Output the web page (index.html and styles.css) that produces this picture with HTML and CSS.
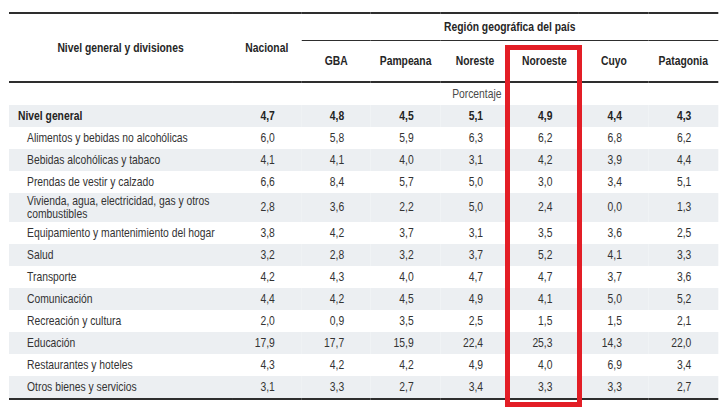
FILE: index.html
```html
<!DOCTYPE html>
<html lang="es">
<head>
<meta charset="utf-8">
<title>Variación por región</title>
<link rel="stylesheet" href="styles.css">
</head>
<body>
<div class="wrap">
  <div class="narrow">
    <table class="tbl">
      <colgroup>
        <col class="c-name">
        <col><col><col><col><col><col><col>
      </colgroup>
      <thead>
        <tr class="h1">
          <th rowspan="2" class="h-name">Nivel general y divisiones</th>
          <th rowspan="2" class="h-nac">Nacional</th>
          <th colspan="6" class="h-region">Región geográfica del país</th>
        </tr>
        <tr class="h2">
          <th>GBA</th><th>Pampeana</th><th>Noreste</th><th>Noroeste</th><th>Cuyo</th><th>Patagonia</th>
        </tr>
      </thead>
      <tbody>
        <tr class="unit"><td></td><td></td><td></td><td></td><td class="unit-cell">Porcentaje</td><td></td><td></td><td></td></tr>
        <tr class="total alt"><td class="name">Nivel general</td><td>4,7</td><td>4,8</td><td>4,5</td><td>5,1</td><td>4,9</td><td>4,4</td><td>4,3</td></tr>
        <tr><td class="name sub">Alimentos y bebidas no alcohólicas</td><td>6,0</td><td>5,8</td><td>5,9</td><td>6,3</td><td>6,2</td><td>6,8</td><td>6,2</td></tr>
        <tr class="alt"><td class="name sub">Bebidas alcohólicas y tabaco</td><td>4,1</td><td>4,1</td><td>4,0</td><td>3,1</td><td>4,2</td><td>3,9</td><td>4,4</td></tr>
        <tr><td class="name sub">Prendas de vestir y calzado</td><td>6,6</td><td>8,4</td><td>5,7</td><td>5,0</td><td>3,0</td><td>3,4</td><td>5,1</td></tr>
        <tr class="alt tall"><td class="name sub">Vivienda, agua, electricidad, gas y otros<br>combustibles</td><td>2,8</td><td>3,6</td><td>2,2</td><td>5,0</td><td>2,4</td><td>0,0</td><td>1,3</td></tr>
        <tr><td class="name sub">Equipamiento y mantenimiento del hogar</td><td>3,8</td><td>4,2</td><td>3,7</td><td>3,1</td><td>3,5</td><td>3,6</td><td>2,5</td></tr>
        <tr class="alt"><td class="name sub">Salud</td><td>3,2</td><td>2,8</td><td>3,2</td><td>3,7</td><td>5,2</td><td>4,1</td><td>3,3</td></tr>
        <tr><td class="name sub">Transporte</td><td>4,2</td><td>4,3</td><td>4,0</td><td>4,7</td><td>4,7</td><td>3,7</td><td>3,6</td></tr>
        <tr class="alt"><td class="name sub">Comunicación</td><td>4,4</td><td>4,2</td><td>4,5</td><td>4,9</td><td>4,1</td><td>5,0</td><td>5,2</td></tr>
        <tr><td class="name sub">Recreación y cultura</td><td>2,0</td><td>0,9</td><td>3,5</td><td>2,5</td><td>1,5</td><td>1,5</td><td>2,1</td></tr>
        <tr class="alt"><td class="name sub">Educación</td><td>17,9</td><td>17,7</td><td>15,9</td><td>22,4</td><td>25,3</td><td>14,3</td><td>22,0</td></tr>
        <tr><td class="name sub">Restaurantes y hoteles</td><td>4,3</td><td>4,2</td><td>4,2</td><td>4,9</td><td>4,0</td><td>6,9</td><td>3,4</td></tr>
        <tr class="alt last"><td class="name sub">Otros bienes y servicios</td><td>3,1</td><td>3,3</td><td>2,7</td><td>3,4</td><td>3,3</td><td>3,3</td><td>2,7</td></tr>
      </tbody>
    </table>
  </div>
  <div class="highlight"></div>
</div>
</body>
</html>
```

FILE: styles.css
```css
html, body {
  margin: 0;
  padding: 0;
  background: #ffffff;
  overflow: hidden;
}

body {
  font-family: "Liberation Sans", Arial, sans-serif;
  font-size: 12.6px;
  color: #333333;
}

.wrap {
  position: relative;
  padding: 12px 0 0 9px;
  width: 709px;
  height: 400px;
}

/* Emulates the condensed grotesque of the source table */
.narrow {
  width: 864.6px;
  transform: scaleX(0.82);
  transform-origin: 0 0;
}

.tbl {
  width: 864.6px;
  table-layout: fixed;
  border-collapse: collapse;
  border-spacing: 0;
}

.c-name {
  width: 272px;
}

.tbl th {
  font-weight: bold;
  color: #262626;
  padding: 0;
  text-align: center;
  vertical-align: middle;
  line-height: 14px;
}

.h1 th {
  border-top: 2px solid #2e2e2e;
  height: 26px;
}

.h1 .h-name,
.h1 .h-nac {
  border-bottom: 2px solid #2e2e2e;
}

.h-region {
  border-bottom: 1.5px solid #2e2e2e;
}

.h2 th {
  height: 40px;
  border-bottom: 2px solid #2e2e2e;
}

.tbl td {
  padding: 0 32.5px 0 0;
  text-align: right;
  vertical-align: middle;
  line-height: 14px;
  height: 22px;
  white-space: nowrap;
}

.tbl td.name {
  text-align: left;
  padding: 0 0 0 11px;
}

.tbl td.sub {
  padding-left: 22px;
}

.tbl td.unit-cell {
  padding-right: 10px;
  color: #4a4a4a;
}

.alt td {
  background: #eceff2;
}

.total td {
  font-weight: bold;
  color: #232323;
}

.tall td {
  height: 29px;
  line-height: 13px;
}

.last td {
  border-bottom: 2px solid #2e2e2e;
}

.highlight {
  position: absolute;
  left: 505px;
  top: 45px;
  width: 77px;
  height: 362px;
  box-sizing: border-box;
  border: 5px solid #e31e26;
  pointer-events: none;
}
```
